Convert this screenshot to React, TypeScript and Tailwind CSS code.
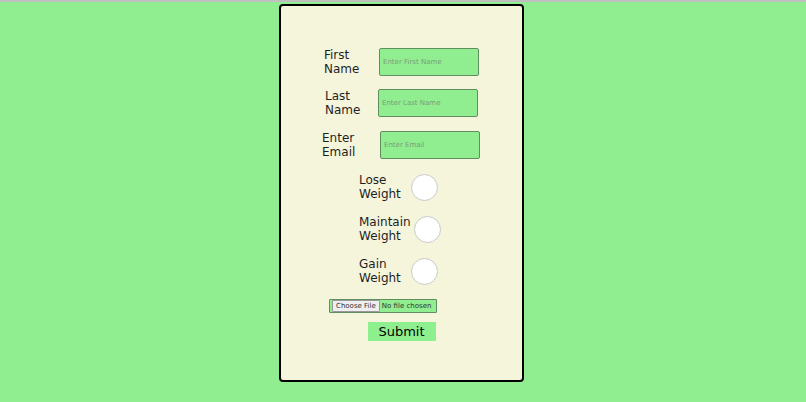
import React from 'react';

const labelCls = "shrink-0 text-[12px] leading-[14px] text-[#1f1f1f]";
const inputCls =
  "w-[100px] h-[28px] bg-[#90ee90] border-[1.5px] border-[#5f8f5f] rounded-[2px] px-[3px] text-[7px] text-black placeholder:text-[#7a9c7a] outline-none";
const radioCls =
  "appearance-none w-[27px] h-[27px] rounded-full bg-white border border-[#c9c9c9] shrink-0";

export default function App() {
  return (
    <div
      className="min-h-screen bg-[#90ee90] border-t-2 border-[#bfbfbf] pt-[2px]"
      style={{ fontFamily: '"DejaVu Sans", sans-serif' }}
    >
      <form
        className="ml-[279px] w-[245px] h-[378px] bg-[#f5f5dc] border-2 border-black rounded-[4px] flex flex-col pt-[42px]"
        onSubmit={e => e.preventDefault()}
      >
        {/* Text fields */}
        <div className="flex items-center">
          <label className={`${labelCls} ml-[43px] w-[55px]`}>First Name</label>
          <input className={inputCls} placeholder="Enter First Name" />
        </div>
        <div className="flex items-center mt-[13px]">
          <label className={`${labelCls} ml-[44px] w-[53px]`}>Last Name</label>
          <input className={inputCls} placeholder="Enter Last Name" />
        </div>
        <div className="flex items-center mt-[14px]">
          <label className={`${labelCls} ml-[41px] w-[58px]`}>Enter Email</label>
          <input className={inputCls} placeholder="Enter Email" />
        </div>

        {/* Goal */}
        <div className="flex items-center mt-[14px] ml-[78px]">
          <label className={`${labelCls} w-[52px]`}>Lose Weight</label>
          <input type="radio" name="goal" className={radioCls} />
        </div>
        <div className="flex items-center mt-[14px] ml-[78px]">
          <label className={`${labelCls} w-[55px]`}>Maintain Weight</label>
          <input type="radio" name="goal" className={radioCls} />
        </div>
        <div className="flex items-center mt-[14px] ml-[78px]">
          <label className={`${labelCls} w-[52px]`}>Gain Weight</label>
          <input type="radio" name="goal" className={radioCls} />
        </div>

        {/* Upload + submit */}
        <input
          type="file"
          className="ml-[48px] mt-[14px] w-[108px] h-[14px] bg-[#90ee90] border-[1.5px] border-[#5f8f5f] rounded-[1px] px-[2px] text-[7px] leading-[10px] text-[#333] file:text-[7px] file:px-[3px] file:py-0 file:mr-[2px] file:bg-[#efefef] file:border file:border-[#999] file:rounded-[1px]"
        />
        <button
          type="submit"
          className="self-center mt-[9px] w-[68px] h-[19px] bg-[#8eef8e] text-[13px] leading-none text-black"
        >
          Submit
        </button>
      </form>
    </div>
  );
}
